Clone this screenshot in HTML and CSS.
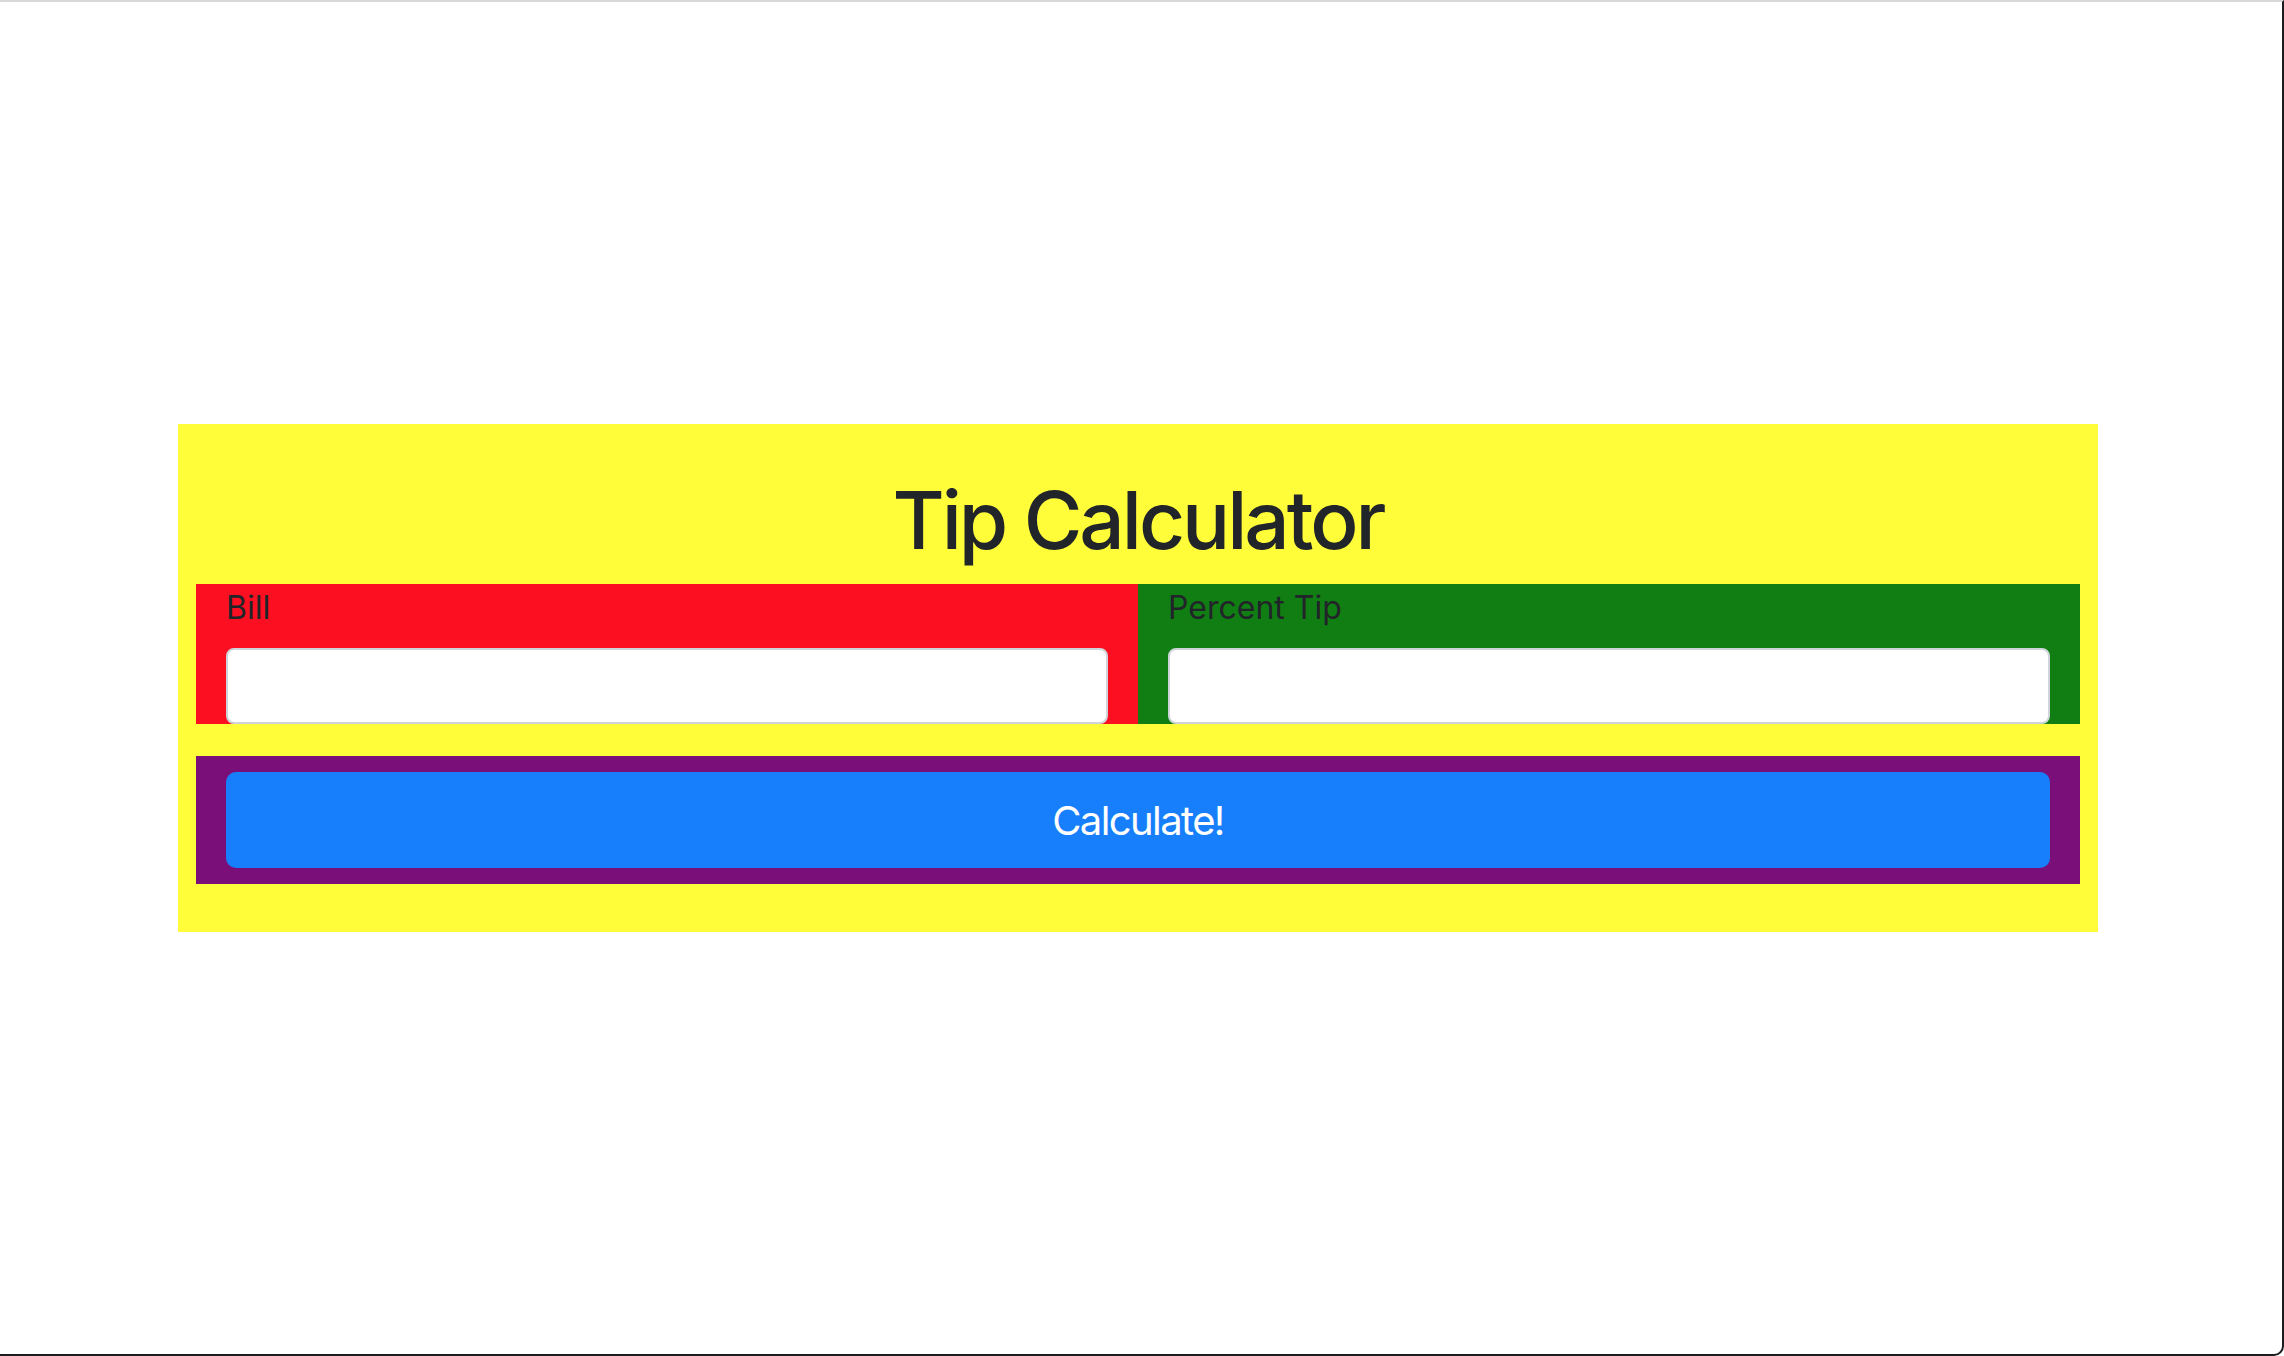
FILE: index.html
```html
<!DOCTYPE html>
<html lang="en">
<head>
<meta charset="utf-8">
<title>Tip Calculator</title>
<link rel="stylesheet" href="styles.css">
</head>
<body>
<div class="frame">
  <main class="page">
    <section class="calculator">
      <h1 class="title">Tip Calculator</h1>
      <form class="form">
        <div class="row">
          <div class="col col-bill">
            <label class="label" for="bill">Bill</label>
            <input class="input" id="bill" type="text">
          </div>
          <div class="col col-tip">
            <label class="label" for="tip">Percent Tip</label>
            <input class="input" id="tip" type="text">
          </div>
        </div>
        <div class="action">
          <button class="btn" type="button">Calculate!</button>
        </div>
      </form>
    </section>
  </main>
</div>
</body>
</html>
```

FILE: styles.css
```css
html, body {
  margin: 0;
  padding: 0;
  background: #ffffff;
}

body {
  font-family: Inter, "Noto Sans", "Liberation Sans", sans-serif;
  color: #212529;
}

.frame {
  box-sizing: border-box;
  width: 2284px;
  height: 1356px;
  border-top: 2px solid #d8d8d8;
  border-right: 2px solid #1d1d1f;
  border-bottom: 2px solid #1d1d1f;
  border-bottom-right-radius: 10px;
  overflow: hidden;
}

.page {
  padding: 422px 0 0 178px;
}

.calculator {
  box-sizing: border-box;
  width: 1920px;
  background: #fffc3a;
  padding: 48px 18px;
}

.title {
  margin: 0 0 16px;
  font-size: 80px;
  line-height: 96px;
  font-weight: 500;
  text-align: center;
  letter-spacing: -3px;
}

.form {
  margin: 0;
}

.row {
  display: flex;
  margin-bottom: 32px;
}

.col {
  flex: 1 1 0;
  padding: 0 30px;
  display: flex;
  flex-direction: column;
}

.col-bill {
  background: #fc0f20;
}

.col-tip {
  background: #107e13;
}

.label {
  font-size: 32px;
  line-height: 48px;
  margin-bottom: 16px;
  font-weight: 400;
}

.input {
  box-sizing: border-box;
  height: 76px;
  width: 100%;
  border: 2px solid #ced4da;
  border-radius: 8px;
  background: #ffffff;
  margin: 0;
  padding: 12px 24px;
  font: inherit;
  font-size: 32px;
}

.action {
  background: #7b0f7a;
  padding: 16px 30px;
}

.btn {
  display: block;
  box-sizing: border-box;
  width: 100%;
  height: 96px;
  border: none;
  border-radius: 10px;
  background: #177ffb;
  color: #ffffff;
  font-family: inherit;
  font-size: 40px;
  font-weight: 400;
  letter-spacing: -1.6px;
  cursor: pointer;
}
```
